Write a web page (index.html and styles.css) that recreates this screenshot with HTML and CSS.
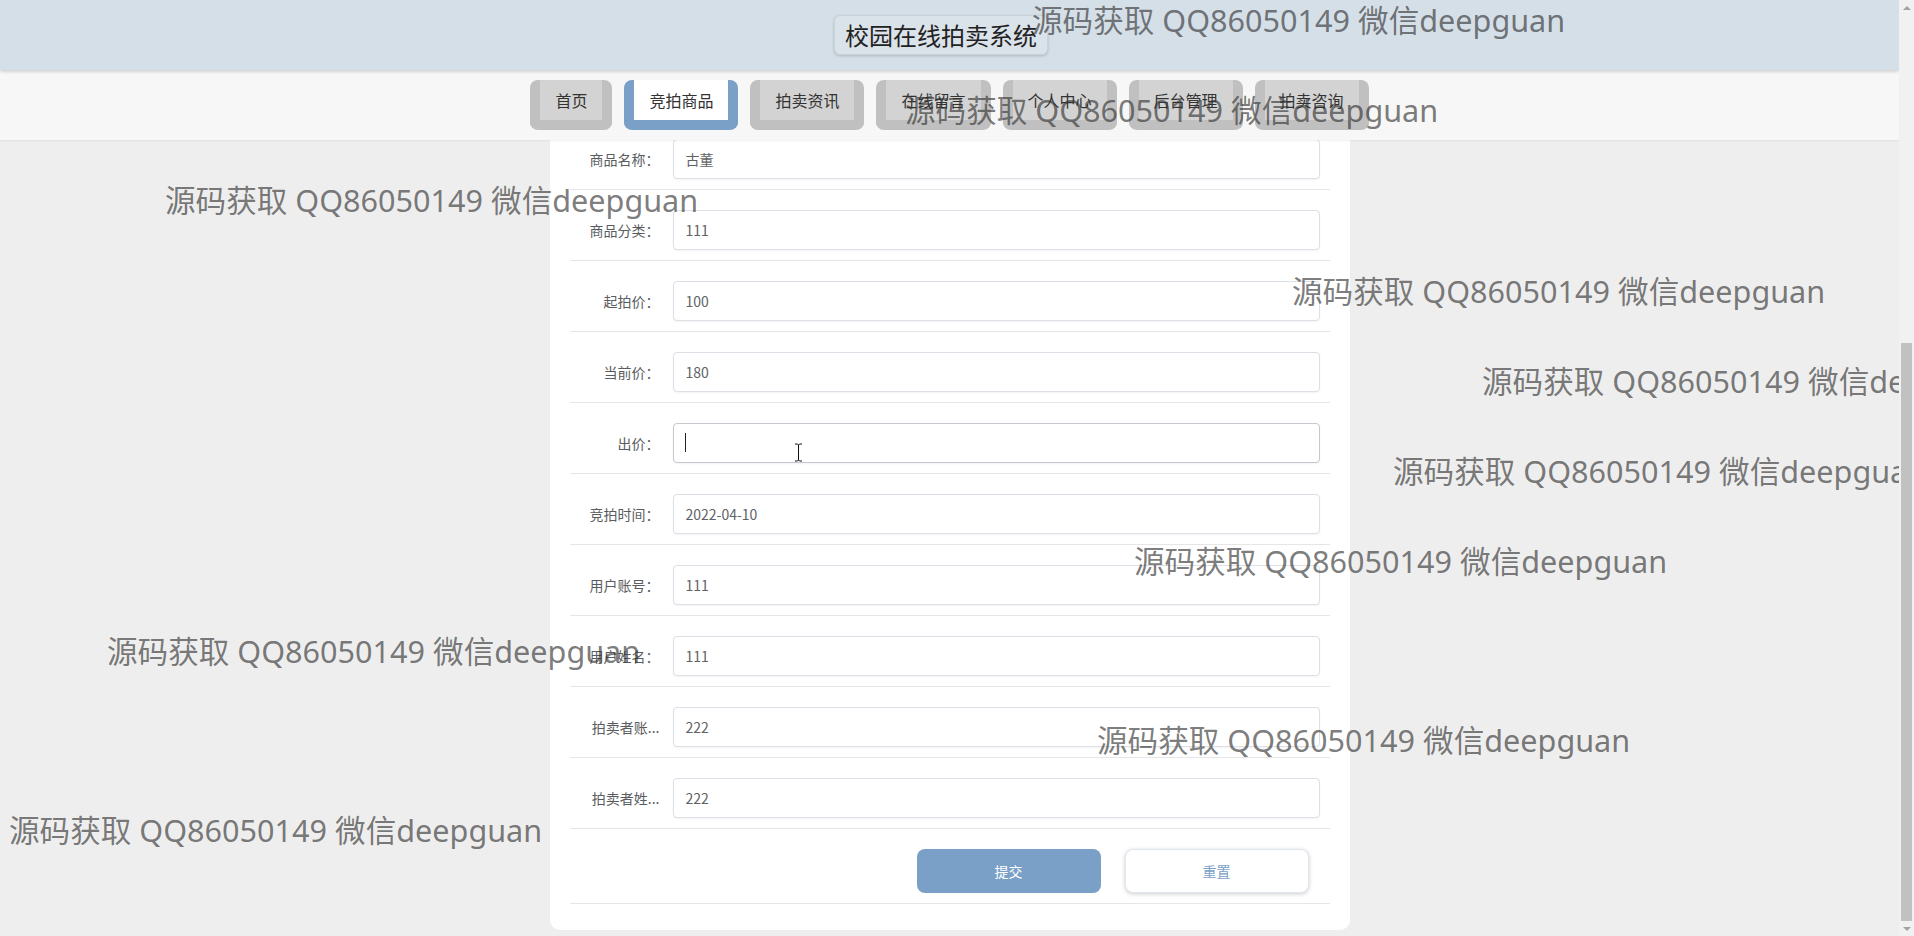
FILE: index.html
```html
<!DOCTYPE html>
<html lang="zh-CN">
<head>
    <meta charset="UTF-8">
    <meta name="viewport" content="width=device-width, initial-scale=1.0">
    <title>校园在线拍卖系统</title>
    <link rel="stylesheet" href="styles.css">
</head>
<body>
    <div class="page">
        <div class="viewport">
            <header class="topbar">
                <div class="site-title">校园在线拍卖系统</div>
            </header>

            <nav class="menu">
                <a class="menu-item" href="#">首页</a>
                <a class="menu-item active" href="#">竞拍商品</a>
                <a class="menu-item" href="#">拍卖资讯</a>
                <a class="menu-item" href="#">在线留言</a>
                <a class="menu-item" href="#">个人中心</a>
                <a class="menu-item" href="#">后台管理</a>
                <a class="menu-item" href="#">拍卖咨询</a>
            </nav>

            <main class="content">
                <form class="detail-card">
                    <div class="form-row">
                        <label class="form-label">商品名称：</label>
                        <input class="form-input" type="text" value="古董">
                    </div>
                    <div class="form-row">
                        <label class="form-label">商品分类：</label>
                        <input class="form-input" type="text" value="111">
                    </div>
                    <div class="form-row">
                        <label class="form-label">起拍价：</label>
                        <input class="form-input" type="text" value="100">
                    </div>
                    <div class="form-row">
                        <label class="form-label">当前价：</label>
                        <input class="form-input" type="text" value="180">
                    </div>
                    <div class="form-row">
                        <label class="form-label">出价：</label>
                        <div class="input-wrap">
                            <input class="form-input focused" type="text" value="" autofocus>
                            <span class="caret"></span>
                        </div>
                    </div>
                    <div class="form-row">
                        <label class="form-label">竞拍时间：</label>
                        <input class="form-input" type="text" value="2022-04-10">
                    </div>
                    <div class="form-row">
                        <label class="form-label">用户账号：</label>
                        <input class="form-input" type="text" value="111">
                    </div>
                    <div class="form-row">
                        <label class="form-label">用户姓名：</label>
                        <input class="form-input" type="text" value="111">
                    </div>
                    <div class="form-row">
                        <label class="form-label">拍卖者账...</label>
                        <input class="form-input" type="text" value="222">
                    </div>
                    <div class="form-row">
                        <label class="form-label">拍卖者姓...</label>
                        <input class="form-input" type="text" value="222">
                    </div>
                    <div class="form-actions">
                        <button type="button" class="btn btn-submit">提交</button>
                        <button type="reset" class="btn btn-reset">重置</button>
                    </div>
                </form>
            </main>

            <!-- watermark text over the whole screen -->
            <span class="wm wm-1">源码获取 QQ86050149 微信deepguan</span>
            <span class="wm wm-2">源码获取 QQ86050149 微信deepguan</span>
            <span class="wm wm-3">源码获取 QQ86050149 微信deepguan</span>
            <span class="wm wm-4">源码获取 QQ86050149 微信deepguan</span>
            <span class="wm wm-5">源码获取 QQ86050149 微信deepguan</span>
            <span class="wm wm-6">源码获取 QQ86050149 微信deepguan</span>
            <span class="wm wm-7">源码获取 QQ86050149 微信deepguan</span>
            <span class="wm wm-8">源码获取 QQ86050149 微信deepguan</span>
            <span class="wm wm-9">源码获取 QQ86050149 微信deepguan</span>
            <span class="wm wm-10">源码获取 QQ86050149 微信deepguan</span>

            <svg class="ibeam" width="9" height="19" viewBox="0 0 9 19">
                <path d="M1 1h2.5l1 1 1-1H8M4.5 2v15M1 18h2.5l1-1 1 1H8" fill="none" stroke="#fff" stroke-width="2.6"/>
                <path d="M1 1h2.5l1 1 1-1H8M4.5 2v15M1 18h2.5l1-1 1 1H8" fill="none" stroke="#111" stroke-width="1"/>
            </svg>
        </div>

        <div class="scrollbar">
            <div class="scroll-btn"><span class="arrow-up"></span></div>
            <div class="scroll-track">
                <div class="scroll-thumb"></div>
            </div>
            <div class="scroll-btn"><span class="arrow-down"></span></div>
        </div>
    </div>
</body>
</html>
```

FILE: styles.css
```css
/* Global Styles */
* {
    box-sizing: border-box;
}
body {
    margin: 0;
    padding: 0;
    background-color: #eeeeee;
    font-family: "Noto Sans CJK SC", "Noto Sans", sans-serif;
    color: #333;
}
.page {
    display: flex;
    height: 100vh;
}
.viewport {
    position: relative;
    flex: 1;
    display: flex;
    flex-direction: column;
    overflow: hidden;
}

/* Header */
.topbar {
    position: relative;
    z-index: 3;
    height: 70px;
    display: flex;
    align-items: center;
    justify-content: center;
    padding-right: 17px;
    background-color: #d5dfe8;
    box-shadow: 0 1px 4px rgba(0, 0, 0, 0.22);
}
.site-title {
    height: 40px;
    line-height: 38px;
    padding: 0 10px;
    font-size: 24px;
    color: #222;
    background-color: #dbe3ea;
    border: 1px solid #c9d1d9;
    border-radius: 6px;
    box-shadow: 0 1px 3px rgba(0, 0, 0, 0.18);
}

/* Menu */
.menu {
    position: relative;
    z-index: 2;
    height: 70px;
    display: flex;
    justify-content: center;
    align-items: flex-start;
    gap: 12px;
    padding-top: 10px;
    background-color: #f7f7f7;
    box-shadow: 0 1px 2px rgba(0, 0, 0, 0.06);
}
.menu-item {
    height: 50px;
    line-height: 40px;
    padding: 0 15px;
    font-size: 16px;
    color: #333;
    text-decoration: none;
    background-color: #d3d3d3;
    border: 10px solid #c0c0c0;
    border-top: 0;
    border-radius: 8px;
}
.menu-item.active {
    background-color: #fff;
    border-color: #7ba0c8;
}

/* Detail form */
.content {
    position: relative;
    z-index: 1;
    flex: 1;
}
.detail-card {
    width: 800px;
    margin: -21px auto 0;
    padding: 0 20px 26px;
    background-color: #fff;
    border-radius: 10px;
}
.form-row {
    display: flex;
    align-items: center;
    padding: 20px 10px 10px;
    border-bottom: 1px solid #e6e6e6;
}
.form-label {
    width: 80px;
    flex-shrink: 0;
    text-align: right;
    font-size: 14px;
    color: #5a5c60;
    white-space: nowrap;
    overflow: hidden;
}
.form-input {
    flex: 1;
    height: 40px;
    margin-left: 13px;
    padding: 0 12px;
    font-family: "Noto Sans CJK SC", sans-serif;
    font-size: 14px;
    color: #606266;
    border: 1px solid #dcdfe6;
    border-radius: 4px;
    box-shadow: 0 1px 2px rgba(0, 0, 0, 0.05);
    outline: none;
    caret-color: transparent;
}
.input-wrap {
    position: relative;
    flex: 1;
    display: flex;
    margin-left: 13px;
}
.input-wrap .form-input {
    margin-left: 0;
}
.form-input.focused {
    border-color: #c4c8cf;
}
.caret {
    position: absolute;
    left: 12px;
    top: 10px;
    width: 1px;
    height: 19px;
    background-color: #222;
}
.form-actions {
    display: flex;
    justify-content: flex-end;
    gap: 24px;
    padding: 20px 21px 10px 10px;
    border-bottom: 1px solid #e6e6e6;
}
.btn {
    width: 184px;
    height: 44px;
    font-family: "Noto Sans CJK SC", sans-serif;
    font-size: 14px;
    border-radius: 8px;
    cursor: pointer;
}
.btn-submit {
    background-color: #7ba0c8;
    color: #fff;
    border: none;
}
.btn-reset {
    background-color: #fff;
    color: #7ba0c8;
    border: 1px solid #dfe6ee;
    box-shadow: 0 1px 4px rgba(0, 0, 0, 0.2);
}

/* Watermark */
.wm {
    position: absolute;
    z-index: 10;
    white-space: nowrap;
    font-family: "Noto Sans", "Noto Sans CJK SC", sans-serif;
    font-size: 30.6px;
    line-height: 36px;
    color: rgba(50, 50, 50, 0.65);
    pointer-events: none;
}
.wm-1 { left: 1032px; top: 2px; }
.wm-2 { left: 905px; top: 92px; }
.wm-3 { left: 165px; top: 182px; }
.wm-4 { left: 1292px; top: 273px; }
.wm-5 { left: 1482px; top: 363px; }
.wm-6 { left: 1393px; top: 453px; }
.wm-7 { left: 1134px; top: 543px; }
.wm-8 { left: 107px; top: 633px; }
.wm-9 { left: 1097px; top: 722px; }
.wm-10 { left: 9px; top: 812px; }

.ibeam {
    position: absolute;
    z-index: 11;
    left: 794px;
    top: 443px;
}

/* Scrollbar */
.scrollbar {
    width: 15px;
    display: flex;
    flex-direction: column;
    background-color: #f1f1f1;
}
.scroll-btn {
    height: 15px;
    display: flex;
    align-items: center;
    justify-content: center;
}
.arrow-up {
    border-left: 4px solid transparent;
    border-right: 4px solid transparent;
    border-bottom: 4px solid #a3a3a3;
}
.arrow-down {
    border-left: 4px solid transparent;
    border-right: 4px solid transparent;
    border-top: 4px solid #a3a3a3;
}
.scroll-track {
    flex: 1;
    display: flex;
    flex-direction: column;
    padding: 328px 2px 0;
}
.scroll-thumb {
    flex: 1;
    background-color: #c1c1c1;
}
```
